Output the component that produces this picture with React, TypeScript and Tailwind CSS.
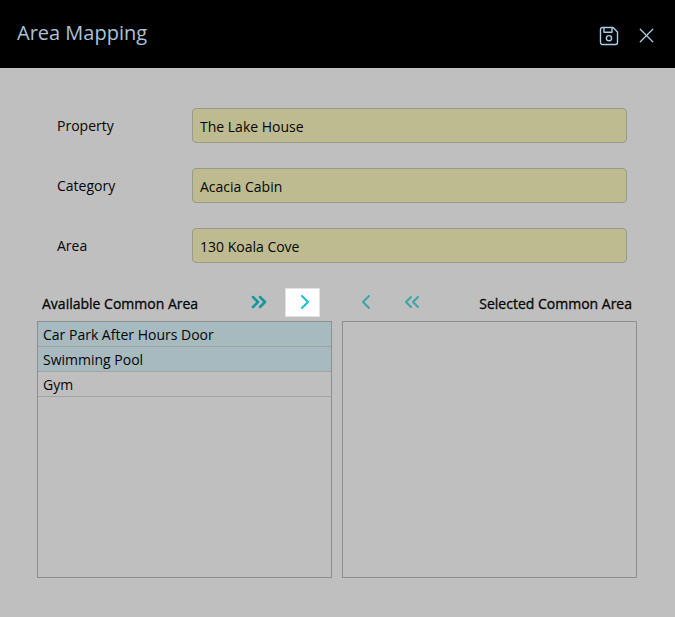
import { ChevronRight, ChevronLeft, ChevronsRight, ChevronsLeft, X } from "lucide-react";

const fields = [
  ["Property", "The Lake House"],
  ["Category", "Acacia Cabin"],
  ["Area", "130 Koala Cove"],
];

const items = [
  ["Car Park After Hours Door", true],
  ["Swimming Pool", true],
  ["Gym", false],
] as const;

function SaveIcon() {
  return (
    <svg width="20" height="20" viewBox="0 0 20 20" fill="none" stroke="currentColor" strokeWidth="1.4" strokeLinejoin="round">
      <path d="M3.5 1.5H14L18.5 6V16.5a2 2 0 0 1-2 2H3.5a2 2 0 0 1-2-2V3.5a2 2 0 0 1 2-2Z" />
      <path d="M5 1.5V6.2H13V1.5" />
      <circle cx="10" cy="12.2" r="2.6" />
    </svg>
  );
}

export default function App() {
  return (
    <div className="w-[675px] h-[617px] overflow-hidden bg-[#bfbfbf] text-[14px] text-[#050505]" style={{ fontFamily: '"Open Sans", sans-serif' }}>
      <header className="h-[68px] bg-black flex items-center justify-between pl-[17px] pr-[16px]">
        <h1 className="text-[20px] leading-[28px] text-[#a9c3d6] -mt-[3px]">Area Mapping</h1>
        <div className="flex items-center gap-[15px] mt-[3px] text-[#a9d0e8]">
          <SaveIcon />
          <X size={25} strokeWidth={1.2} />
        </div>
      </header>

      <div className="pt-[40px] pl-[57px] pr-[48px] flex flex-col gap-[25px]">
        {fields.map(([label, value]) => (
          <div key={label} className="flex items-center">
            <div className="w-[135px]">{label}</div>
            <div className="flex-1 h-[35px] rounded-[4px] border border-[#9a9a8c] bg-[#bfbb91] pl-[7px] pt-[1px] flex items-center">{value}</div>
          </div>
        ))}
      </div>

      <div className="mt-[24px] pl-[37px] flex gap-[10px]">
        <div className="w-[295px]">
          <div className="h-[30px] flex items-center">
            <div className="w-[205px] pl-[5px] pt-[2px] font-medium [-webkit-text-stroke:0.3px_#050505]">Available Common Area</div>
            <div className="w-[34px] flex justify-center text-[#11979c]"><ChevronsRight size={24} strokeWidth={2.5} /></div>
            <div className="ml-[9px] w-[35px] h-[29px] bg-white border border-[#e2e2e2] flex items-center justify-center pl-[4px] text-[#12c4d0]"><ChevronRight size={24} strokeWidth={2} /></div>
          </div>
          <div className="mt-[4px] h-[257px] border border-[#8f8f8f]">
            {items.map(([name, selected]) => (
              <div key={name} className={`h-[25px] leading-[26px] pl-[5px] border-b border-[#a3a3a3] ${selected ? "bg-[#a6bac0]" : ""}`}>{name}</div>
            ))}
          </div>
        </div>
        <div className="w-[295px]">
          <div className="h-[30px] flex items-center">
            <div className="w-[48px] flex justify-center text-[#3aa5aa]"><ChevronLeft size={24} strokeWidth={2} /></div>
            <div className="w-[44px] flex justify-center text-[#3aa5aa]"><ChevronsLeft size={24} strokeWidth={2} /></div>
            <div className="flex-1 text-right pr-[5px] pt-[2px] font-medium [-webkit-text-stroke:0.3px_#050505]">Selected Common Area</div>
          </div>
          <div className="mt-[4px] h-[257px] border border-[#8f8f8f]"></div>
        </div>
      </div>
    </div>
  );
}
